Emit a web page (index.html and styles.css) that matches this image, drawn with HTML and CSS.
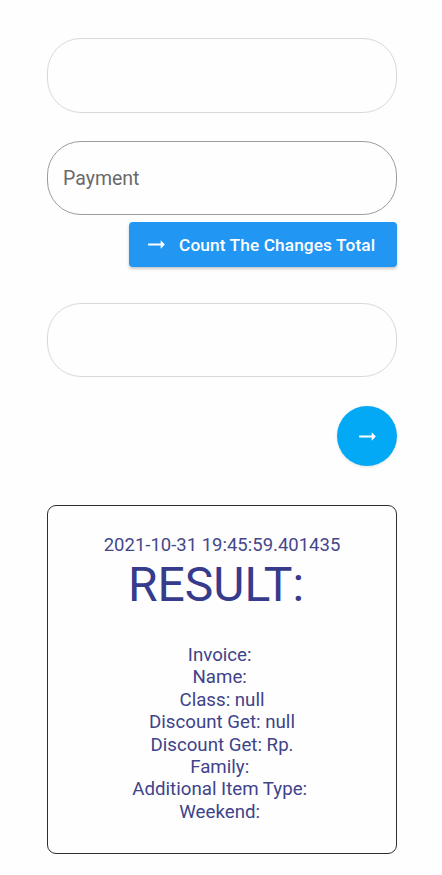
FILE: index.html
```html
<!DOCTYPE html>
<html>
<head>
<meta charset="utf-8">
<link rel="stylesheet" href="styles.css">
</head>
<body>
<main class="page">
  <div class="field field-light"></div>
  <div class="field field-dark field-payment"><span class="hint">Payment</span></div>
  <button class="count-btn" type="button">
    <svg class="arrow-icon" viewBox="0 0 24 24" width="25" height="25"><path d="M16.01 11H4v2h12.01v3L20 12l-3.99-4z" fill="#fff"/></svg>
    <span class="count-label">Count The Changes Total</span>
  </button>
  <div class="field field-light field-third"></div>
  <button class="fab" type="button">
    <svg viewBox="0 0 24 24" width="25" height="25"><path d="M16.01 11H4v2h12.01v3L20 12l-3.99-4z" fill="#fff"/></svg>
  </button>
  <section class="result">
    <div class="stamp">2021-10-31 19:45:59.401435</div>
    <div class="title">RESULT: </div>
    <div class="lines">
      <div class="line">Invoice: </div>
      <div class="line">Name: </div>
      <div class="line">Class: null</div>
      <div class="line">Discount Get: null</div>
      <div class="line">Discount Get: Rp.</div>
      <div class="line">Family: </div>
      <div class="line">Additional Item Type: </div>
      <div class="line">Weekend: </div>
    </div>
  </section>
</main>
</body>
</html>
```
FILE: styles.css
```css
html, body {
  margin: 0;
  padding: 0;
  background: #fefefe;
}
body {
  font-family: Roboto, "Liberation Sans", sans-serif;
}
.page {
  display: flex;
  flex-direction: column;
  padding: 38px 45px 0 47px;
}
.field {
  box-sizing: border-box;
  height: 75px;
  border-radius: 34px;
  border: 1px solid #d9d9d9;
  display: flex;
  align-items: center;
}
.field-dark {
  border-color: #9c9c9c;
  height: 74px;
}
.field-payment {
  margin-top: 28px;
}
.hint {
  margin-left: 15px;
  font-size: 19.5px;
  color: #6a6a6a;
}
.count-btn {
  align-self: flex-end;
  margin-top: 7px;
  width: 268px;
  height: 45px;
  box-sizing: border-box;
  border: none;
  border-radius: 4px;
  background: #2196f3;
  box-shadow: 0 2px 3px rgba(0,0,0,0.22);
  display: flex;
  align-items: center;
  justify-content: flex-start;
  padding: 0 0 0 15px;
  gap: 10px;
  font-family: Roboto, "Liberation Sans", sans-serif;
  color: #fff;
}
.arrow-icon {
  display: block;
  flex: none;
}
.count-label {
  font-size: 17.3px;
  font-weight: 500;
  letter-spacing: 0.1px;
}
.field-third {
  margin-top: 36px;
  height: 74px;
}
.fab {
  align-self: flex-end;
  margin-top: 29px;
  width: 60px;
  height: 60px;
  border-radius: 50%;
  border: none;
  background: #03a9f4;
  box-shadow: 0 1px 3px rgba(0,0,0,0.12);
  display: flex;
  align-items: center;
  justify-content: center;
  padding: 0;
}
.fab svg {
  display: block;
}
.result {
  margin-top: 39px;
  box-sizing: border-box;
  height: 349px;
  border: 1.5px solid #2e2e2e;
  border-radius: 9px;
  padding-top: 28px;
  text-align: center;
  color: #3a3d8a;
}
.stamp {
  font-size: 18.5px;
  line-height: 22px;
  color: #45478a;
}
.title {
  margin-top: 1px;
  font-size: 48px;
  line-height: 56px;
  color: #363b8c;
  white-space: pre;
}
.lines {
  margin-top: 31px;
  font-size: 18.7px;
  line-height: 22.4px;
  color: #40438a;
}
.line {
  white-space: pre;
}
```
